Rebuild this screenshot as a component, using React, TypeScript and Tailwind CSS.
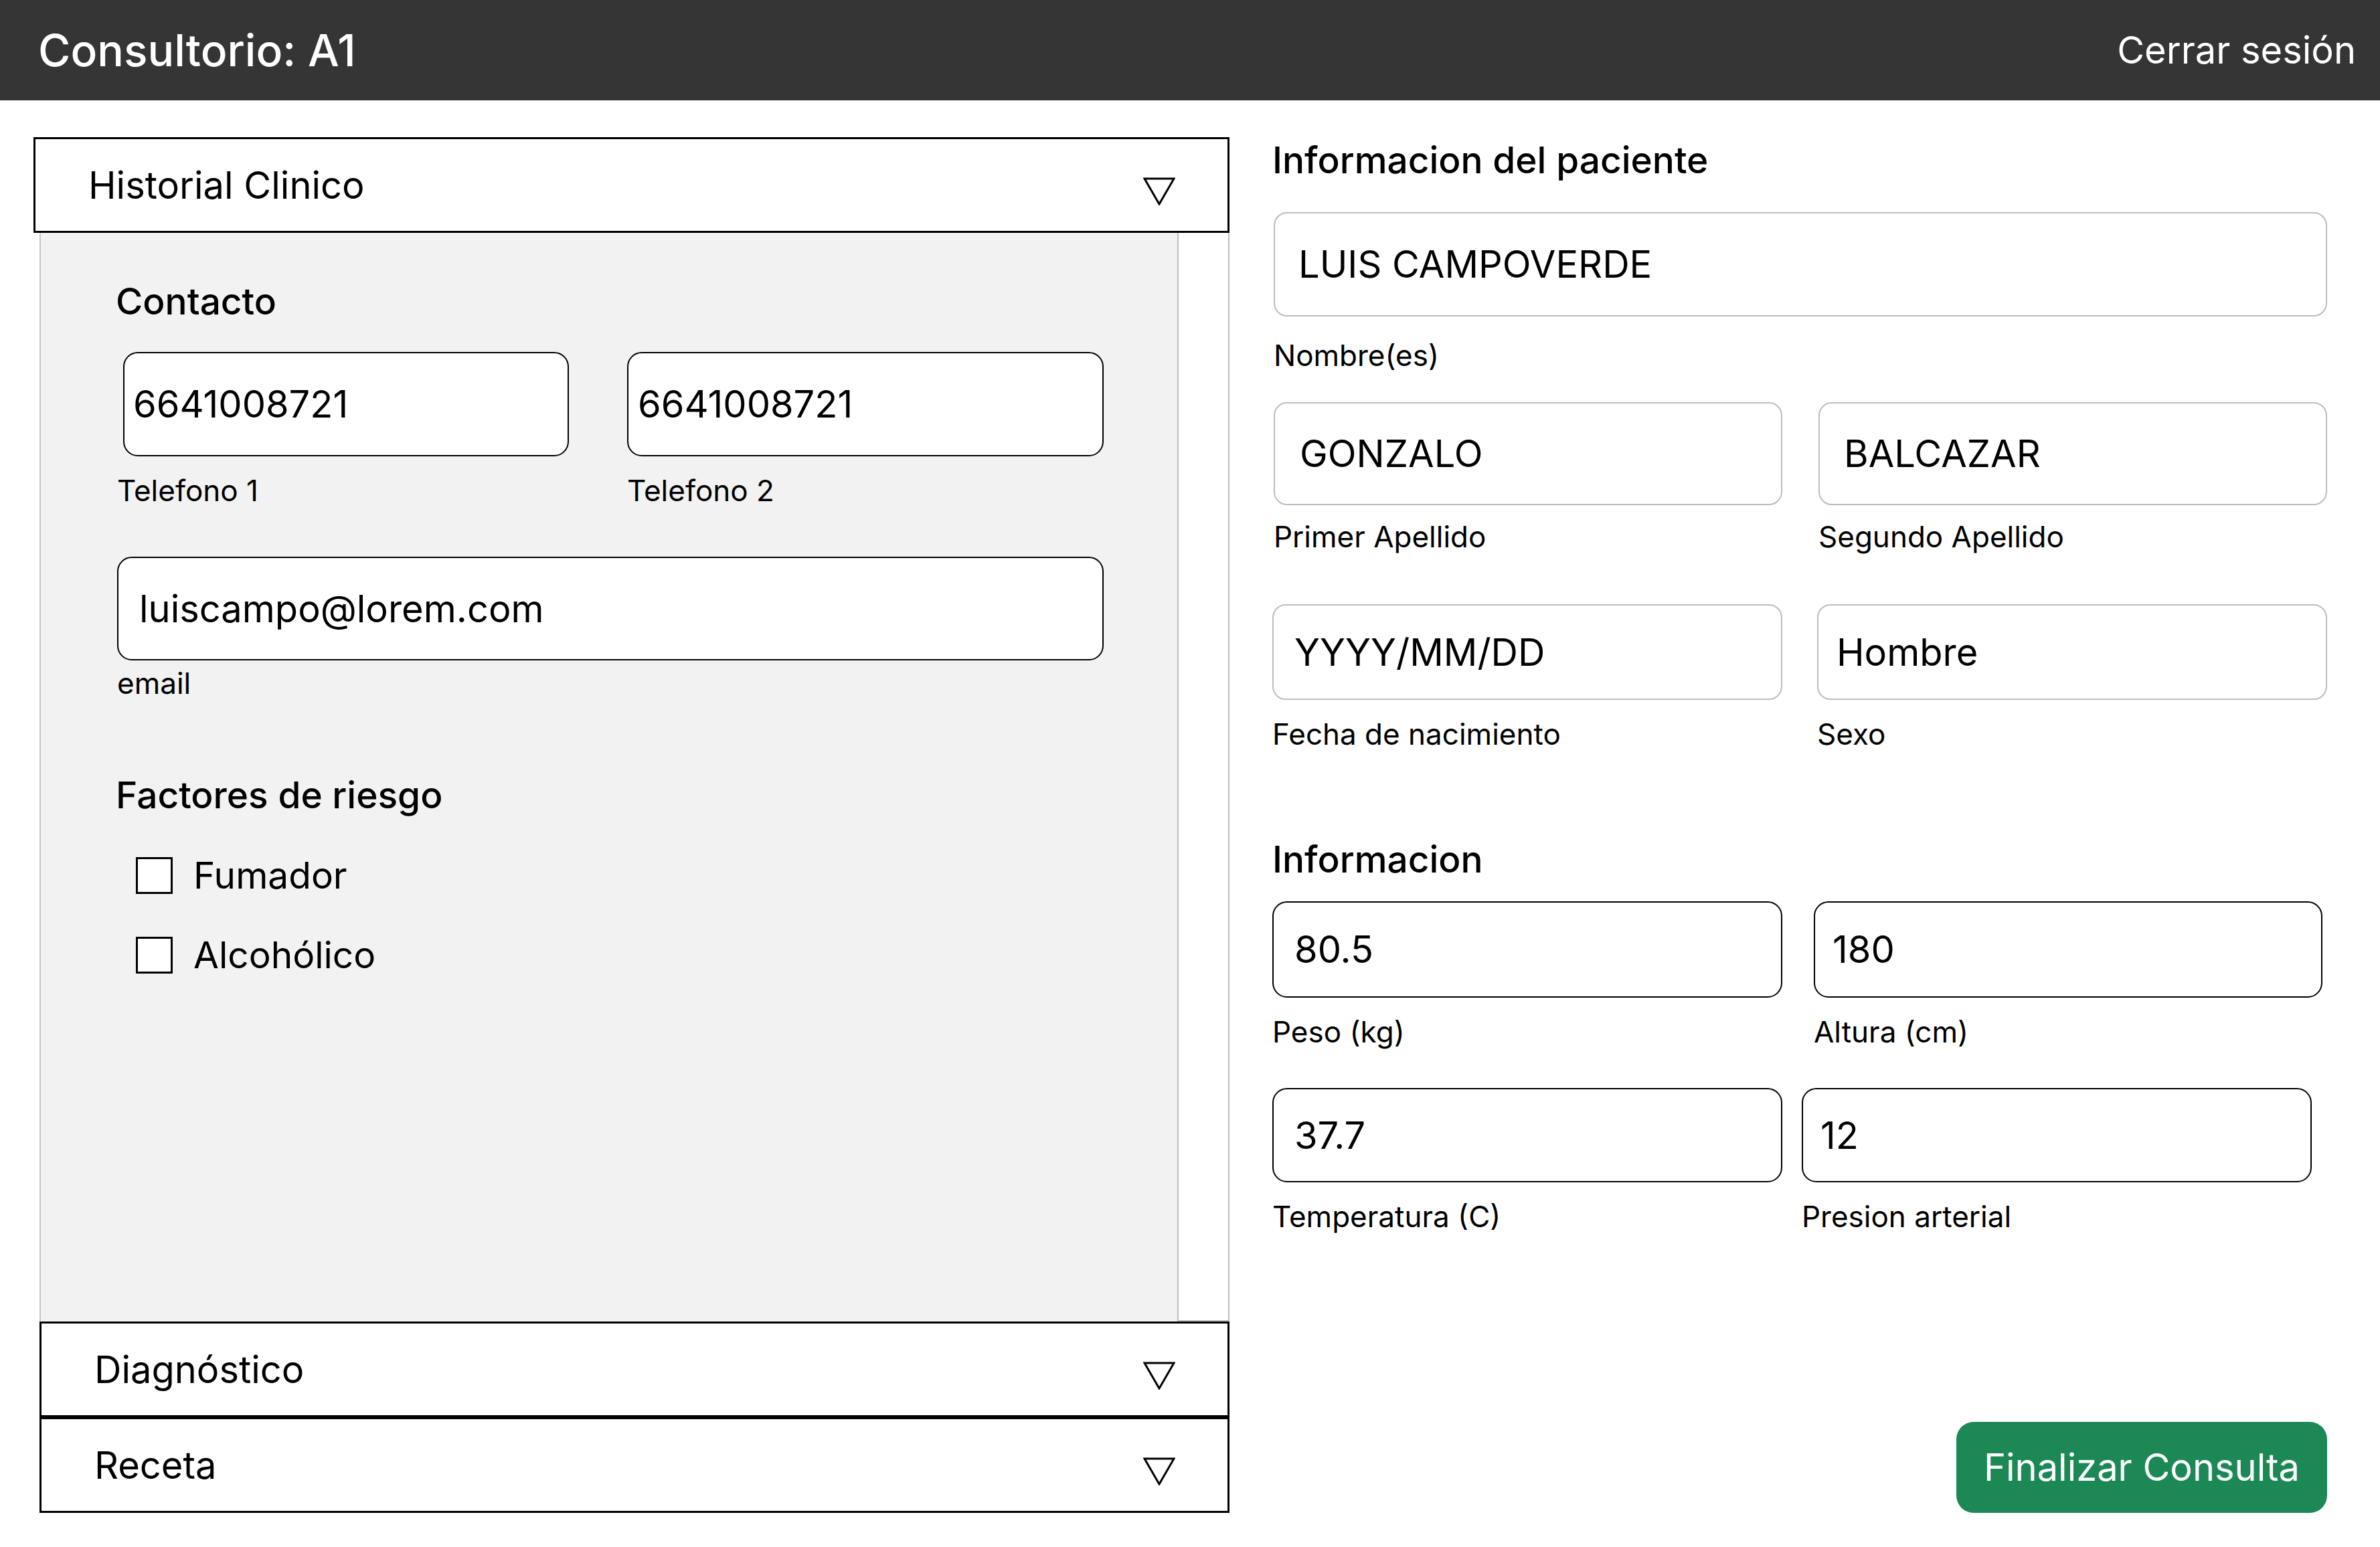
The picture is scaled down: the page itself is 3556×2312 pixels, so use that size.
const Triangle = () => (
  <svg width="48" height="42" viewBox="0 0 48 42" className="mt-[18px] shrink-0">
    <path d="M2 2 H46 L24 40 Z" fill="none" stroke="#000" strokeWidth="3" />
  </svg>
);

const AccordionHeader = ({ title, className = '' }: { title: string; className?: string }) => (
  <div
    className={`flex h-[143px] shrink-0 items-center justify-between border-[3px] border-black bg-white pl-[79px] pr-[78px] ${className}`}
  >
    <span className="text-[56px] leading-[68px]">{title}</span>
    <Triangle />
  </div>
);

const Box = ({
  value,
  className = '',
}: {
  value: string;
  className?: string;
}) => (
  <div className={`flex items-center bg-white text-[56px] leading-[68px] ${className}`}>{value}</div>
);

const Label = ({ text, className = '' }: { text: string; className?: string }) => (
  <div className={`text-[44px] leading-[53px] ${className}`}>{text}</div>
);

const Check = ({ label, className = '' }: { label: string; className?: string }) => (
  <label className={`ml-[30px] flex items-center gap-[31px] ${className}`}>
    <span className="h-[55px] w-[55px] border-[3px] border-black bg-white" />
    <span className="text-[55px] leading-[68px]">{label}</span>
  </label>
);

export default function App() {
  return (
    <div className="flex h-[2312px] w-[3556px] flex-col bg-white font-['Inter',sans-serif] text-black">
      <header className="flex h-[150px] shrink-0 items-center justify-between bg-[#353535] pl-[57px] pr-[36px] text-white">
        <h1 className="text-[66px] font-medium leading-[80px]">Consultorio: A1</h1>
        <button className="text-[56px] leading-[68px]">Cerrar sesión</button>
      </header>

      <main className="flex flex-1 pl-[50px]">
        {/* columna izquierda */}
        <section className="flex w-[1787px] flex-col pt-[55px]">
          <AccordionHeader title="Historial Clinico" />

          <div className="ml-[9px] flex h-[1627px]">
            <div className="flex-1 border-l-2 border-[#c6c6c6] bg-[#f2f2f2] pl-[112px] pt-[70px]">
              <h2 className="text-[55px] font-medium leading-[65px]">Contacto</h2>

              <div className="mt-[43px] flex">
                <div className="ml-[11px] w-[666px]">
                  <Box value="6641008721" className="h-[156px] rounded-[22px] border-2 border-black pl-[13px]" />
                </div>
                <div className="ml-[87px] w-[712px]">
                  <Box value="6641008721" className="h-[156px] rounded-[22px] border-2 border-black pl-[14px]" />
                </div>
              </div>
              <div className="mt-[25px] flex">
                <Label text="Telefono 1" className="w-[764px] pl-[2px]" />
                <Label text="Telefono 2" />
              </div>

              <Box
                value="luiscampo@lorem.com"
                className="ml-[2px] mt-[72px] h-[155px] w-[1474px] rounded-[22px] border-2 border-black pl-[31px]"
              />
              <Label text="email" className="mt-[8px] pl-[2px]" />

              <h2 className="mt-[108px] text-[55px] font-medium leading-[65px]">Factores de riesgo</h2>
              <Check label="Fumador" className="mt-[53px]" />
              <Check label="Alcohólico" className="mt-[51px]" />
            </div>
            <div className="w-[78px] border-b-2 border-l-2 border-r-2 border-[#bdbdbd] bg-white" />
          </div>

          <AccordionHeader title="Diagnóstico" className="ml-[9px]" />
          <AccordionHeader title="Receta" className="ml-[9px]" />
        </section>

        {/* columna derecha */}
        <section className="ml-[64px] flex w-[1576px] flex-col pb-[51px] pt-[57px]">
          <h2 className="text-[55px] font-medium leading-[65px]">Informacion del paciente</h2>

          <Box
            value="LUIS CAMPOVERDE"
            className="ml-[2px] mt-[45px] h-[156px] w-[1574px] rounded-[20px] border-2 border-[#bdbdbd] pl-[35px]"
          />
          <Label text="Nombre(es)" className="ml-[2px] mt-[32px]" />

          <div className="mt-[43px] flex">
            <Box value="GONZALO" className="ml-[2px] h-[154px] w-[760px] rounded-[20px] border-2 border-[#bdbdbd] pl-[37px]" />
            <Box value="BALCAZAR" className="ml-[54px] h-[154px] w-[760px] rounded-[20px] border-2 border-[#bdbdbd] pl-[36px]" />
          </div>
          <div className="mt-[21px] flex">
            <Label text="Primer Apellido" className="ml-[2px] w-[814px]" />
            <Label text="Segundo Apellido" />
          </div>

          <div className="mt-[74px] flex">
            <Box value="YYYY/MM/DD" className="h-[143px] w-[762px] rounded-[20px] border-2 border-[#bdbdbd] pl-[31px]" />
            <Box value="Hombre" className="ml-[52px] h-[143px] w-[762px] rounded-[20px] border-2 border-[#bdbdbd] pl-[27px]" />
          </div>
          <div className="mt-[25px] flex">
            <Label text="Fecha de nacimiento" className="w-[814px]" />
            <Label text="Sexo" />
          </div>

          <h2 className="mt-[128px] text-[55px] font-medium leading-[65px]">Informacion</h2>

          <div className="mt-[30px] flex">
            <Box value="80.5" className="h-[144px] w-[762px] rounded-[22px] border-2 border-black pl-[31px]" />
            <Box value="180" className="ml-[47px] h-[144px] w-[760px] rounded-[22px] border-2 border-black pl-[26px]" />
          </div>
          <div className="mt-[25px] flex">
            <Label text="Peso (kg)" className="w-[809px]" />
            <Label text="Altura (cm)" />
          </div>

          <div className="mt-[57px] flex">
            <Box value="37.7" className="h-[141px] w-[762px] rounded-[22px] border-2 border-black pl-[31px]" />
            <Box value="12" className="ml-[29px] h-[141px] w-[762px] rounded-[22px] border-2 border-black pl-[26px]" />
          </div>
          <div className="mt-[25px] flex">
            <Label text="Temperatura (C)" className="w-[791px]" />
            <Label text="Presion arterial" />
          </div>

          <button className="mt-auto flex h-[136px] w-[554px] items-center justify-center self-end rounded-[26px] bg-[#1b8856] text-[56px] leading-[68px] text-white">
            Finalizar Consulta
          </button>
        </section>
      </main>
    </div>
  );
}
